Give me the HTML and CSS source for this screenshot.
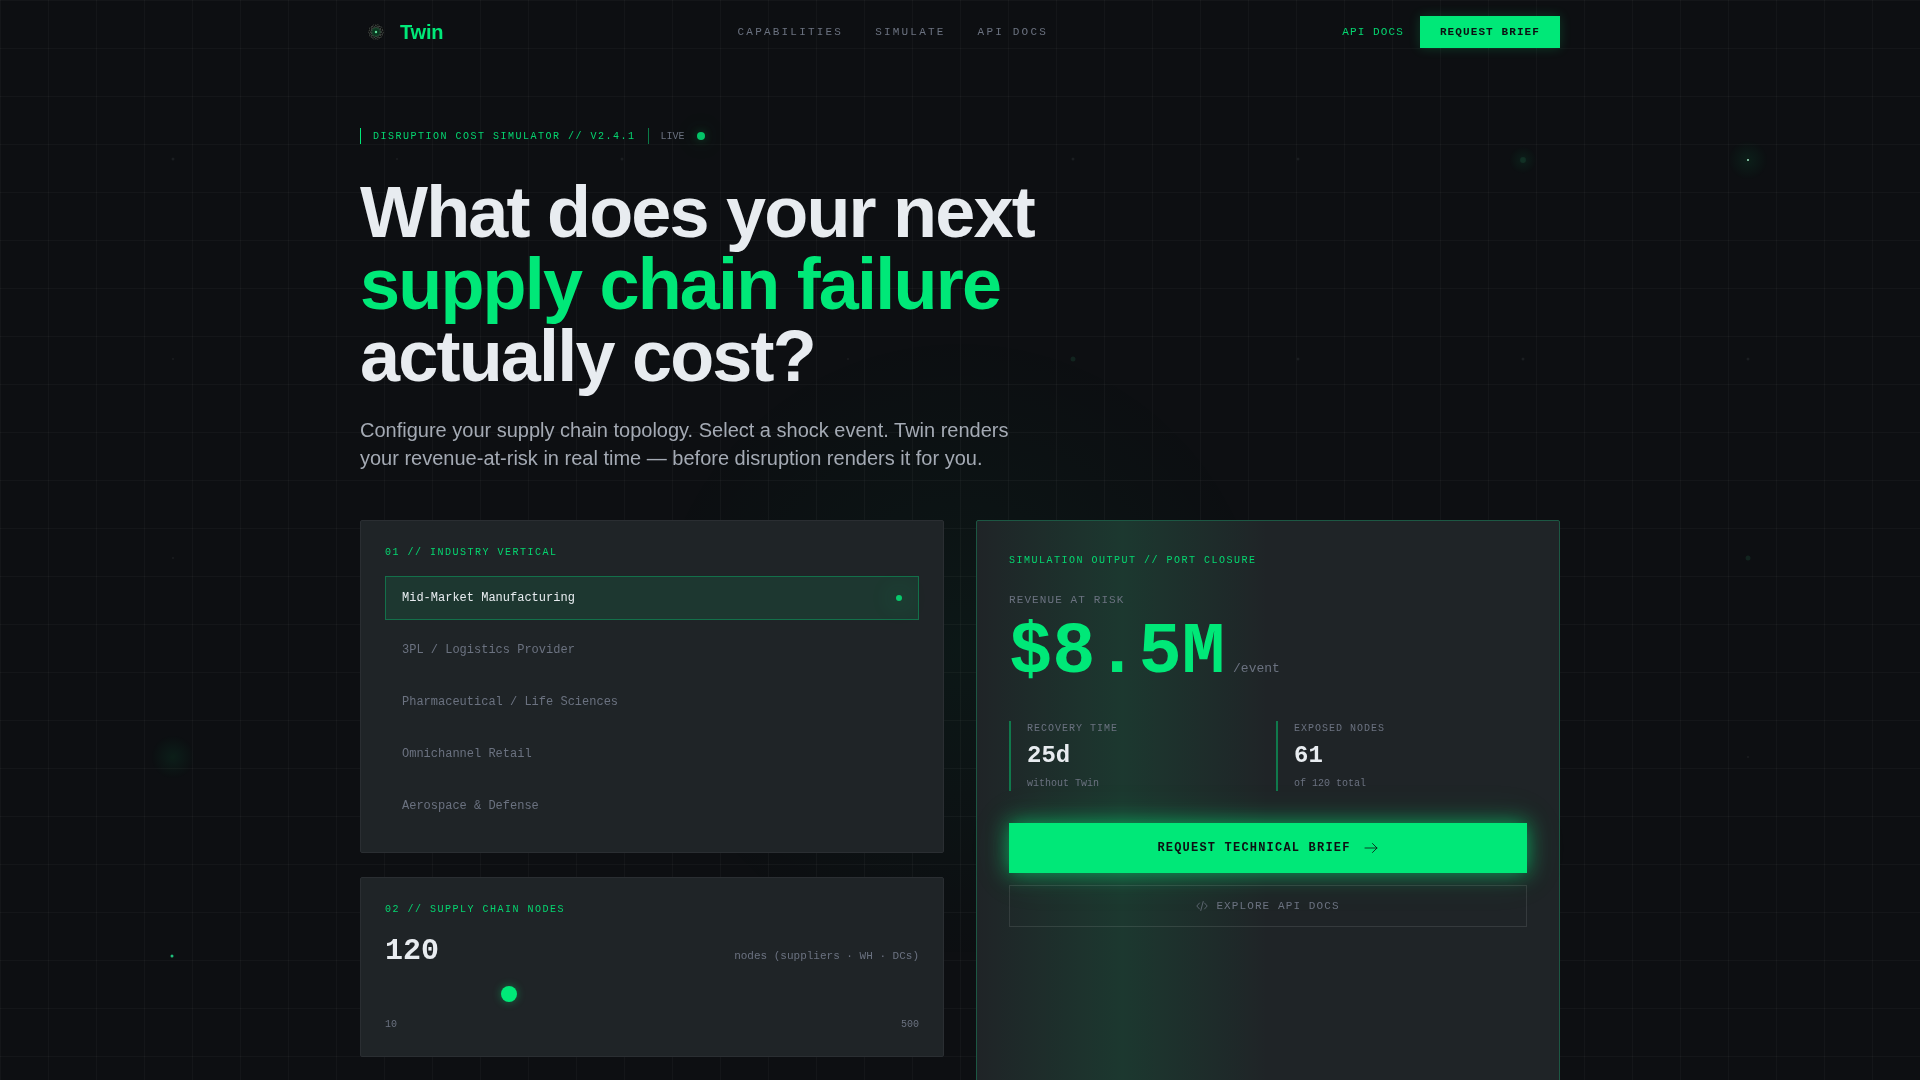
FILE: index.html
```html
<!DOCTYPE html>
<html lang="en">
<head>
<meta charset="utf-8">
<meta name="viewport" content="width=device-width, initial-scale=1">
<title>Twin</title>
<link rel="stylesheet" href="styles.css">
</head>
<body>
<div class="backdrop" aria-hidden="true">
  <svg class="backdrop-nodes" viewBox="0 0 1920 1080" preserveAspectRatio="xMidYMid slice">
    <defs>
      <radialGradient id="halo">
        <stop offset="0" stop-color="#00e878" stop-opacity=".07"/>
        <stop offset="1" stop-color="#00e878" stop-opacity="0"/>
      </radialGradient>
    </defs>
    <g fill="#1b1e21">
      <circle cx="173" cy="159" r="1.5"/><circle cx="397" cy="159" r="1"/><circle cx="622" cy="159" r="1.5"/>
      <circle cx="1073" cy="159" r="1.5"/><circle cx="1298" cy="159" r="1.5"/>
      <circle cx="173" cy="359" r="1"/><circle cx="848" cy="359" r="1"/>
      <circle cx="1298" cy="359" r="1.5"/><circle cx="1523" cy="359" r="1.5"/><circle cx="1748" cy="359" r="1.5"/>
      <circle cx="173" cy="558" r="1"/><circle cx="1748" cy="757" r="1"/>
    </g>
    <g fill="#12241f">
      <circle cx="1073" cy="359" r="2.5"/><circle cx="1748" cy="558" r="2.5"/><circle cx="1523" cy="160" r="3"/>
    </g>
    <g fill="url(#halo)">
      <circle cx="1523" cy="160" r="14"/><circle cx="1748" cy="160" r="20"/><circle cx="173" cy="757" r="22"/>
    </g>
    <circle cx="1748" cy="160" r="1" fill="#9fe8c6"/>
    <circle cx="172" cy="956" r="1.5" fill="#1fbf7c"/>
  </svg>
</div>

<header class="site-header">
  <div class="container header-row">
    <a class="brand" href="#">
      <svg class="brand-mark" viewBox="0 0 32 32" aria-hidden="true">
        <circle cx="16" cy="16" r="8" fill="#07090a"/>
        <g fill="none" stroke="#50554f" stroke-width=".7" stroke-dasharray="2 .8">
          <ellipse cx="16" cy="16" rx="7.500" ry="4"/>
          <ellipse cx="16" cy="16" rx="7.500" ry="4" transform="rotate(36 16 16)"/>
          <ellipse cx="16" cy="16" rx="7.500" ry="4" transform="rotate(72 16 16)"/>
          <ellipse cx="16" cy="16" rx="7.500" ry="4" transform="rotate(108 16 16)"/>
          <ellipse cx="16" cy="16" rx="7.500" ry="4" transform="rotate(144 16 16)"/>
        </g>
        <circle cx="16" cy="16" r="4.500" fill="#0e4a2a" fill-opacity=".7"/>
        <circle cx="16" cy="16" r="1.200" fill="#5fe09a"/>
      </svg>
      <span>Twin</span>
    </a>
    <nav class="main-nav" aria-label="Main">
      <a href="#capabilities">CAPABILITIES</a>
      <a href="#simulate">SIMULATE</a>
      <a href="#docs">API DOCS</a>
    </nav>
    <div class="header-actions">
      <a class="docs-link" href="#docs">API DOCS</a>
      <button class="brief-button" type="button">REQUEST BRIEF</button>
    </div>
  </div>
</header>

<main class="container" id="simulate">
  <div class="eyebrow">
    <span class="eyebrow-title">DISRUPTION COST SIMULATOR // V2.4.1</span>
    <span class="eyebrow-status">LIVE</span>
    <span class="live-dot"></span>
  </div>
  <h1>What does your next<br><span class="accent">supply chain failure</span><br>actually cost?</h1>
  <p class="lead">Configure your supply chain topology. Select a shock event. Twin renders your revenue-at-risk in real time — before disruption renders it for you.</p>

  <div class="simulator">
    <div class="controls">
      <section class="card">
        <h2 class="card-label">01 // INDUSTRY VERTICAL</h2>
        <div class="options">
          <button class="option option-active" type="button" aria-pressed="true">Mid-Market Manufacturing<span class="option-dot"></span></button>
          <button class="option" type="button">3PL / Logistics Provider</button>
          <button class="option" type="button">Pharmaceutical / Life Sciences</button>
          <button class="option" type="button">Omnichannel Retail</button>
          <button class="option" type="button">Aerospace &amp; Defense</button>
        </div>
      </section>
      <section class="card">
        <h2 class="card-label">02 // SUPPLY CHAIN NODES</h2>
        <div class="node-row">
          <output class="node-count" for="nodes">120</output>
          <label class="node-unit" for="nodes">nodes (suppliers · WH · DCs)</label>
        </div>
        <input class="node-slider" id="nodes" type="range" min="10" max="500" value="120">
        <div class="node-range"><span>10</span><span>500</span></div>
      </section>
    </div>

    <section class="card output">
      <h2 class="card-label">SIMULATION OUTPUT // PORT CLOSURE</h2>
      <p class="risk-label">REVENUE AT RISK</p>
      <p class="risk"><span class="risk-value">$8.5M</span><span class="risk-unit">/event</span></p>
      <div class="stats">
        <div class="stat">
          <p class="stat-label">RECOVERY TIME</p>
          <p class="stat-value">25d</p>
          <p class="stat-note">without Twin</p>
        </div>
        <div class="stat">
          <p class="stat-label">EXPOSED NODES</p>
          <p class="stat-value">61</p>
          <p class="stat-note">of 120 total</p>
        </div>
      </div>
      <div class="output-actions">
        <button class="primary-action" type="button">REQUEST TECHNICAL BRIEF
          <svg width="16" height="16" viewBox="0 0 16 16" fill="none" stroke="currentColor" stroke-width=".8" stroke-linecap="round" stroke-linejoin="round" aria-hidden="true"><path d="M2 8h12M9.500 3.500 14 8l-4.500 4.500"/></svg>
        </button>
        <button class="secondary-action" type="button">
          <svg width="12" height="12" viewBox="0 0 12 12" fill="none" stroke="currentColor" stroke-width=".8" stroke-linecap="round" stroke-linejoin="round" aria-hidden="true"><path d="M3.500 3 .8 6l2.700 3M8.500 3l2.700 3-2.700 3M7.200 1.500 4.800 10.500"/></svg>
          EXPLORE API DOCS
        </button>
      </div>
    </section>
  </div>
</main>
</body>
</html>
```
FILE: styles.css
```css
:root {
  --green: #00e878;
  --bg: #0d0f12;
  --surface: #1f2427;
  --text: #e8ecf0;
  --muted: #6b7280;
  --mono: "Liberation Mono", "Courier New", monospace;
  --sans: "Liberation Sans", Arial, sans-serif;
}

* {
  box-sizing: border-box;
}

body {
  margin: 0;
  min-height: 100vh;
  background: var(--bg);
  color: var(--text);
  font-family: var(--sans);
}

h1, h2, p {
  margin: 0;
}

a {
  text-decoration: none;
}

button {
  margin: 0;
  border: 0;
  border-radius: 0;
  font-family: var(--mono);
  cursor: pointer;
}

/* Fixed decoration behind the page: grid lines, glow, topology nodes */
.backdrop {
  position: fixed;
  inset: 0;
  z-index: -1;
  background:
    linear-gradient(rgba(255, 255, 255, 0.03) 1px, transparent 1px) 0 0 / 48px 48px,
    linear-gradient(90deg, rgba(255, 255, 255, 0.03) 1px, transparent 1px) 0 0 / 48px 48px,
    radial-gradient(circle 320px at 50% 60%, rgba(0, 232, 140, 0.04), transparent);
}

.backdrop-nodes {
  display: block;
  width: 100%;
  height: 100%;
}

.container {
  width: 100%;
  max-width: 1248px;
  margin: 0 auto;
  padding: 0 24px;
}

/* Header */
.header-row {
  display: flex;
  align-items: center;
  justify-content: space-between;
  padding-top: 16px;
  padding-bottom: 16px;
}

.brand {
  display: flex;
  align-items: center;
  gap: 8px;
  color: var(--green);
  font-size: 20px;
  font-weight: 700;
  letter-spacing: -0.01em;
}

.brand-mark {
  width: 32px;
  height: 32px;
}

.main-nav {
  display: flex;
  gap: 32px;
  font: 11px/16px var(--mono);
  letter-spacing: 0.2em;
}

.main-nav a {
  color: var(--muted);
}

.header-actions {
  display: flex;
  align-items: center;
  gap: 16px;
}

.docs-link,
.brief-button {
  font: 11px/16px var(--mono);
  letter-spacing: 0.1em;
}

.docs-link {
  color: #05d670;
}

.brief-button {
  padding: 8px 20px;
  background: var(--green);
  color: var(--bg);
  font-weight: 700;
  box-shadow: 0 0 12px rgba(0, 232, 120, 0.2);
}

/* Hero */
.eyebrow {
  display: flex;
  align-items: center;
  gap: 12px;
  margin: 64px 0 32px;
  font: 10px/15px var(--mono);
}

.eyebrow-title,
.eyebrow-status {
  padding: 1px 0 0 12px;
  border-left: 1px solid #0b7a47;
}

.eyebrow-title {
  border-color: var(--green);
  color: #05d670;
  letter-spacing: 0.15em;
}

.eyebrow-status {
  color: var(--muted);
}

.live-dot {
  width: 8px;
  height: 8px;
  border-radius: 50%;
  background: #04c468;
  box-shadow: 0 0 8px rgba(0, 232, 120, 0.25), 0 0 24px rgba(0, 232, 120, 0.3);
}

h1 {
  font-size: 72px;
  line-height: 72px;
  font-weight: 700;
  letter-spacing: -0.025em;
}

.accent {
  color: var(--green);
}

.lead {
  max-width: 672px;
  margin: 24px 0 48px;
  color: #a4aab4;
  font-size: 20px;
  line-height: 28px;
}

/* Simulator */
.simulator {
  display: grid;
  grid-template-columns: 1fr 1fr;
  gap: 32px;
}

.controls {
  display: flex;
  flex-direction: column;
  gap: 24px;
  padding-bottom: 96px;
}

.card {
  padding: 24px;
  border: 1px solid #2a2e32;
  border-radius: 2px;
  background: var(--surface);
  font: 10px/15px var(--mono);
}

.card-label {
  margin-bottom: 16px;
  color: #05d670;
  font: 10px/15px var(--mono);
  letter-spacing: 0.15em;
}

.options {
  display: flex;
  flex-direction: column;
  gap: 8px;
}

.option {
  display: flex;
  align-items: center;
  justify-content: space-between;
  padding: 12px 16px;
  border: 1px solid transparent;
  background: none;
  color: var(--muted);
  font-size: 12px;
  line-height: 18px;
  text-align: left;
}

.option-active {
  border-color: #13704a;
  background: #1d3730;
  color: var(--text);
}

.option-dot {
  width: 6px;
  height: 6px;
  border-radius: 50%;
  background: #08c96c;
  box-shadow: 0 0 24px 4px rgba(0, 232, 120, 0.2);
}

.node-row {
  display: flex;
  align-items: baseline;
  justify-content: space-between;
}

.node-count {
  font-size: 30px;
  line-height: 36px;
  font-weight: 700;
}

.node-unit {
  color: var(--muted);
  font-size: 11px;
}

.node-slider {
  display: block;
  width: 100%;
  height: 18px;
  margin: 16px 0 14px;
  background: transparent;
  appearance: none;
  cursor: pointer;
}

.node-slider::-webkit-slider-thumb {
  width: 16px;
  height: 16px;
  border-radius: 50%;
  background: var(--green);
  box-shadow: 0 0 8px rgba(0, 232, 120, 0.4);
  appearance: none;
}

.node-range {
  display: flex;
  justify-content: space-between;
  color: var(--muted);
}

/* Output panel */
.output {
  padding: 32px;
  border-color: #1c5743;
  background:
    linear-gradient(90deg, transparent, rgba(0, 232, 120, 0.1), transparent) 0 0 / 50% 100% no-repeat,
    var(--surface);
}

.output .card-label {
  margin-bottom: 24px;
}

.risk-label {
  margin-bottom: 8px;
  color: var(--muted);
  font-size: 11px;
  line-height: 17px;
  letter-spacing: 0.1em;
}

.risk {
  display: flex;
  align-items: baseline;
  gap: 8px;
  margin-bottom: 32px;
}

.risk-value {
  color: var(--green);
  font-size: 72px;
  line-height: 72px;
  font-weight: 700;
}

.risk-unit {
  color: var(--muted);
  font-size: 13px;
}

.stats {
  display: grid;
  grid-template-columns: 1fr 1fr;
  gap: 16px;
  margin-bottom: 32px;
}

.stat {
  padding-left: 16px;
  border-left: 2px solid #10794c;
}

.stat-label,
.stat-note {
  color: var(--muted);
}

.stat-label {
  letter-spacing: 0.1em;
}

.stat-value {
  margin: 4px 0;
  font-size: 24px;
  line-height: 32px;
  font-weight: 700;
}

.output-actions {
  display: flex;
  flex-direction: column;
  gap: 12px;
}

.primary-action,
.secondary-action {
  display: flex;
  align-items: center;
  justify-content: center;
  letter-spacing: 0.1em;
}

.primary-action {
  gap: 12px;
  padding: 16px;
  background: var(--green);
  color: var(--bg);
  font-size: 12px;
  line-height: 18px;
  font-weight: 700;
  box-shadow: 0 0 20px rgba(0, 232, 120, 0.6), 0 0 40px rgba(0, 232, 120, 0.15);
}

.secondary-action {
  gap: 8px;
  padding: 12px;
  border: 1px solid rgba(255, 255, 255, 0.1);
  background: none;
  color: var(--muted);
  font-size: 11px;
  line-height: 16px;
}
```
